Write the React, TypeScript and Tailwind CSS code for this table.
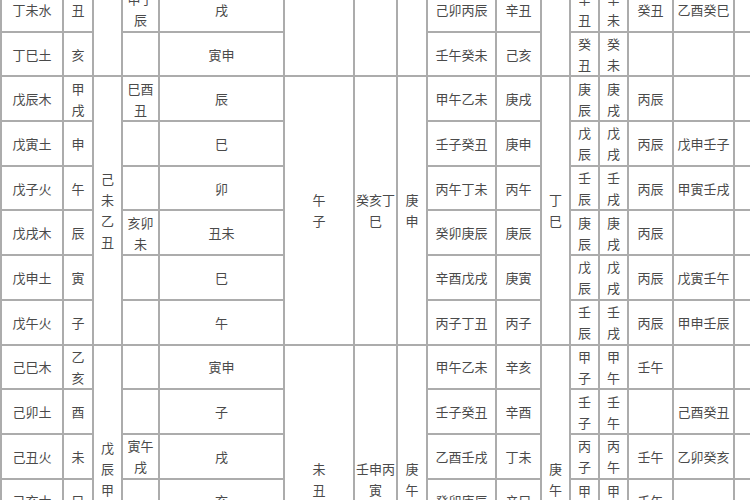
import React from 'react';

type Row = {
  name: string;
  zhi: string;
  he: string;
  chong: string;
  na: string;
  gan: string;
  l: string;
  m: string;
  n: string;
  o: string;
};

type Group = {
  c: string;
  f: string;
  g: string;
  h: string;
  k: string;
  rows: Row[];
};

const r = (
  name: string,
  zhi: string,
  he: string,
  chong: string,
  na: string,
  gan: string,
  l: string,
  m: string,
  n: string,
  o: string
): Row => ({ name, zhi, he, chong, na, gan, l, m, n, o });

const groups: Group[] = [
  {
    c: '',
    f: '',
    g: '',
    h: '',
    k: '',
    rows: [
      r('丁未水', '丑', '申子辰', '戌', '己卯丙辰', '辛丑', '辛丑', '辛未', '癸丑', '乙酉癸巳'),
      r('丁巳土', '亥', '', '寅申', '壬午癸未', '己亥', '癸丑', '癸未', '', ''),
    ],
  },
  {
    c: '己未乙丑',
    f: '午\n子',
    g: '癸亥丁巳',
    h: '庚申',
    k: '丁巳',
    rows: [
      r('戊辰木', '甲戌', '巳酉丑', '辰', '甲午乙未', '庚戌', '庚辰', '庚戌', '丙辰', ''),
      r('戊寅土', '申', '', '巳', '壬子癸丑', '庚申', '戊辰', '戊戌', '丙辰', '戊申壬子'),
      r('戊子火', '午', '', '卯', '丙午丁未', '丙午', '壬辰', '壬戌', '丙辰', '甲寅壬戌'),
      r('戊戌木', '辰', '亥卯未', '丑未', '癸卯庚辰', '庚辰', '庚辰', '庚戌', '丙辰', ''),
      r('戊申土', '寅', '', '巳', '辛酉戊戌', '庚寅', '戊辰', '戊戌', '丙辰', '戊寅壬午'),
      r('戊午火', '子', '', '午', '丙子丁丑', '丙子', '壬辰', '壬戌', '丙辰', '甲申壬辰'),
    ],
  },
  {
    c: '戊辰甲戌',
    f: '未\n丑',
    g: '壬申丙寅',
    h: '庚午',
    k: '庚午',
    rows: [
      r('己巳木', '乙亥', '', '寅申', '甲午乙未', '辛亥', '甲子', '甲午', '壬午', ''),
      r('己卯土', '酉', '', '子', '壬子癸丑', '辛酉', '壬子', '壬午', '', '己酉癸丑'),
      r('己丑火', '未', '寅午戌', '戌', '乙酉壬戌', '丁未', '丙子', '丙午', '壬午', '乙卯癸亥'),
      r('己亥木', '巳', '', '亥', '癸卯庚辰', '辛巳', '甲子', '甲午', '壬午', ''),
      r('己酉土', '卯', '', '酉', '壬子癸丑', '辛卯', '壬子', '壬午', '', ''),
      r('己未火', '丑', '亥卯未', '丑', '乙酉壬戌', '丁丑', '丙子', '丙午', '壬午', ''),
    ],
  },
];

const base =
  'border-2 border-[#acacac] text-center align-middle leading-[21px] whitespace-pre-line break-all';
const cell = `${base} px-[3px]`;
const tight = `${base} px-0`;

const widths = [62, 30, 29, 37, 125, 70, 43, 30, 69, 45, 29, 29, 29, 45, 61, 30];

export default function App() {
  return (
    <div className="w-[750px] h-[500px] overflow-hidden bg-white">
      <table className="-mt-[14px] w-[763px] table-fixed border-collapse font-['Noto_Sans_CJK_SC',sans-serif] text-[13px] text-[#4a4a4a]">
        <colgroup>
          {widths.map((w, i) => (
            <col key={i} style={{ width: w }} />
          ))}
        </colgroup>
        <tbody>
          {groups.map((g, gi) =>
            g.rows.map((row, idx) => (
              <tr key={`${gi}-${idx}`} className="h-[44.7px]">
                <td className={cell}>{row.name}</td>
                <td className={cell}>{row.zhi}</td>
                {idx === 0 && (
                  <td className={cell} rowSpan={g.rows.length}>
                    {g.c}
                  </td>
                )}
                <td className={cell}>{row.he}</td>
                <td className={cell}>{row.chong}</td>
                {idx === 0 && (
                  <>
                    <td className={cell} rowSpan={g.rows.length}>
                      {g.f}
                    </td>
                    <td className={tight} rowSpan={g.rows.length}>
                      {g.g}
                    </td>
                    <td className={cell} rowSpan={g.rows.length}>
                      {g.h}
                    </td>
                  </>
                )}
                <td className={cell}>{row.na}</td>
                <td className={cell}>{row.gan}</td>
                {idx === 0 && (
                  <td className={cell} rowSpan={g.rows.length}>
                    {g.k}
                  </td>
                )}
                <td className={cell}>{row.l}</td>
                <td className={cell}>{row.m}</td>
                <td className={cell}>{row.n}</td>
                <td className={cell}>{row.o}</td>
                <td className={cell}></td>
              </tr>
            ))
          )}
        </tbody>
      </table>
    </div>
  );
}
